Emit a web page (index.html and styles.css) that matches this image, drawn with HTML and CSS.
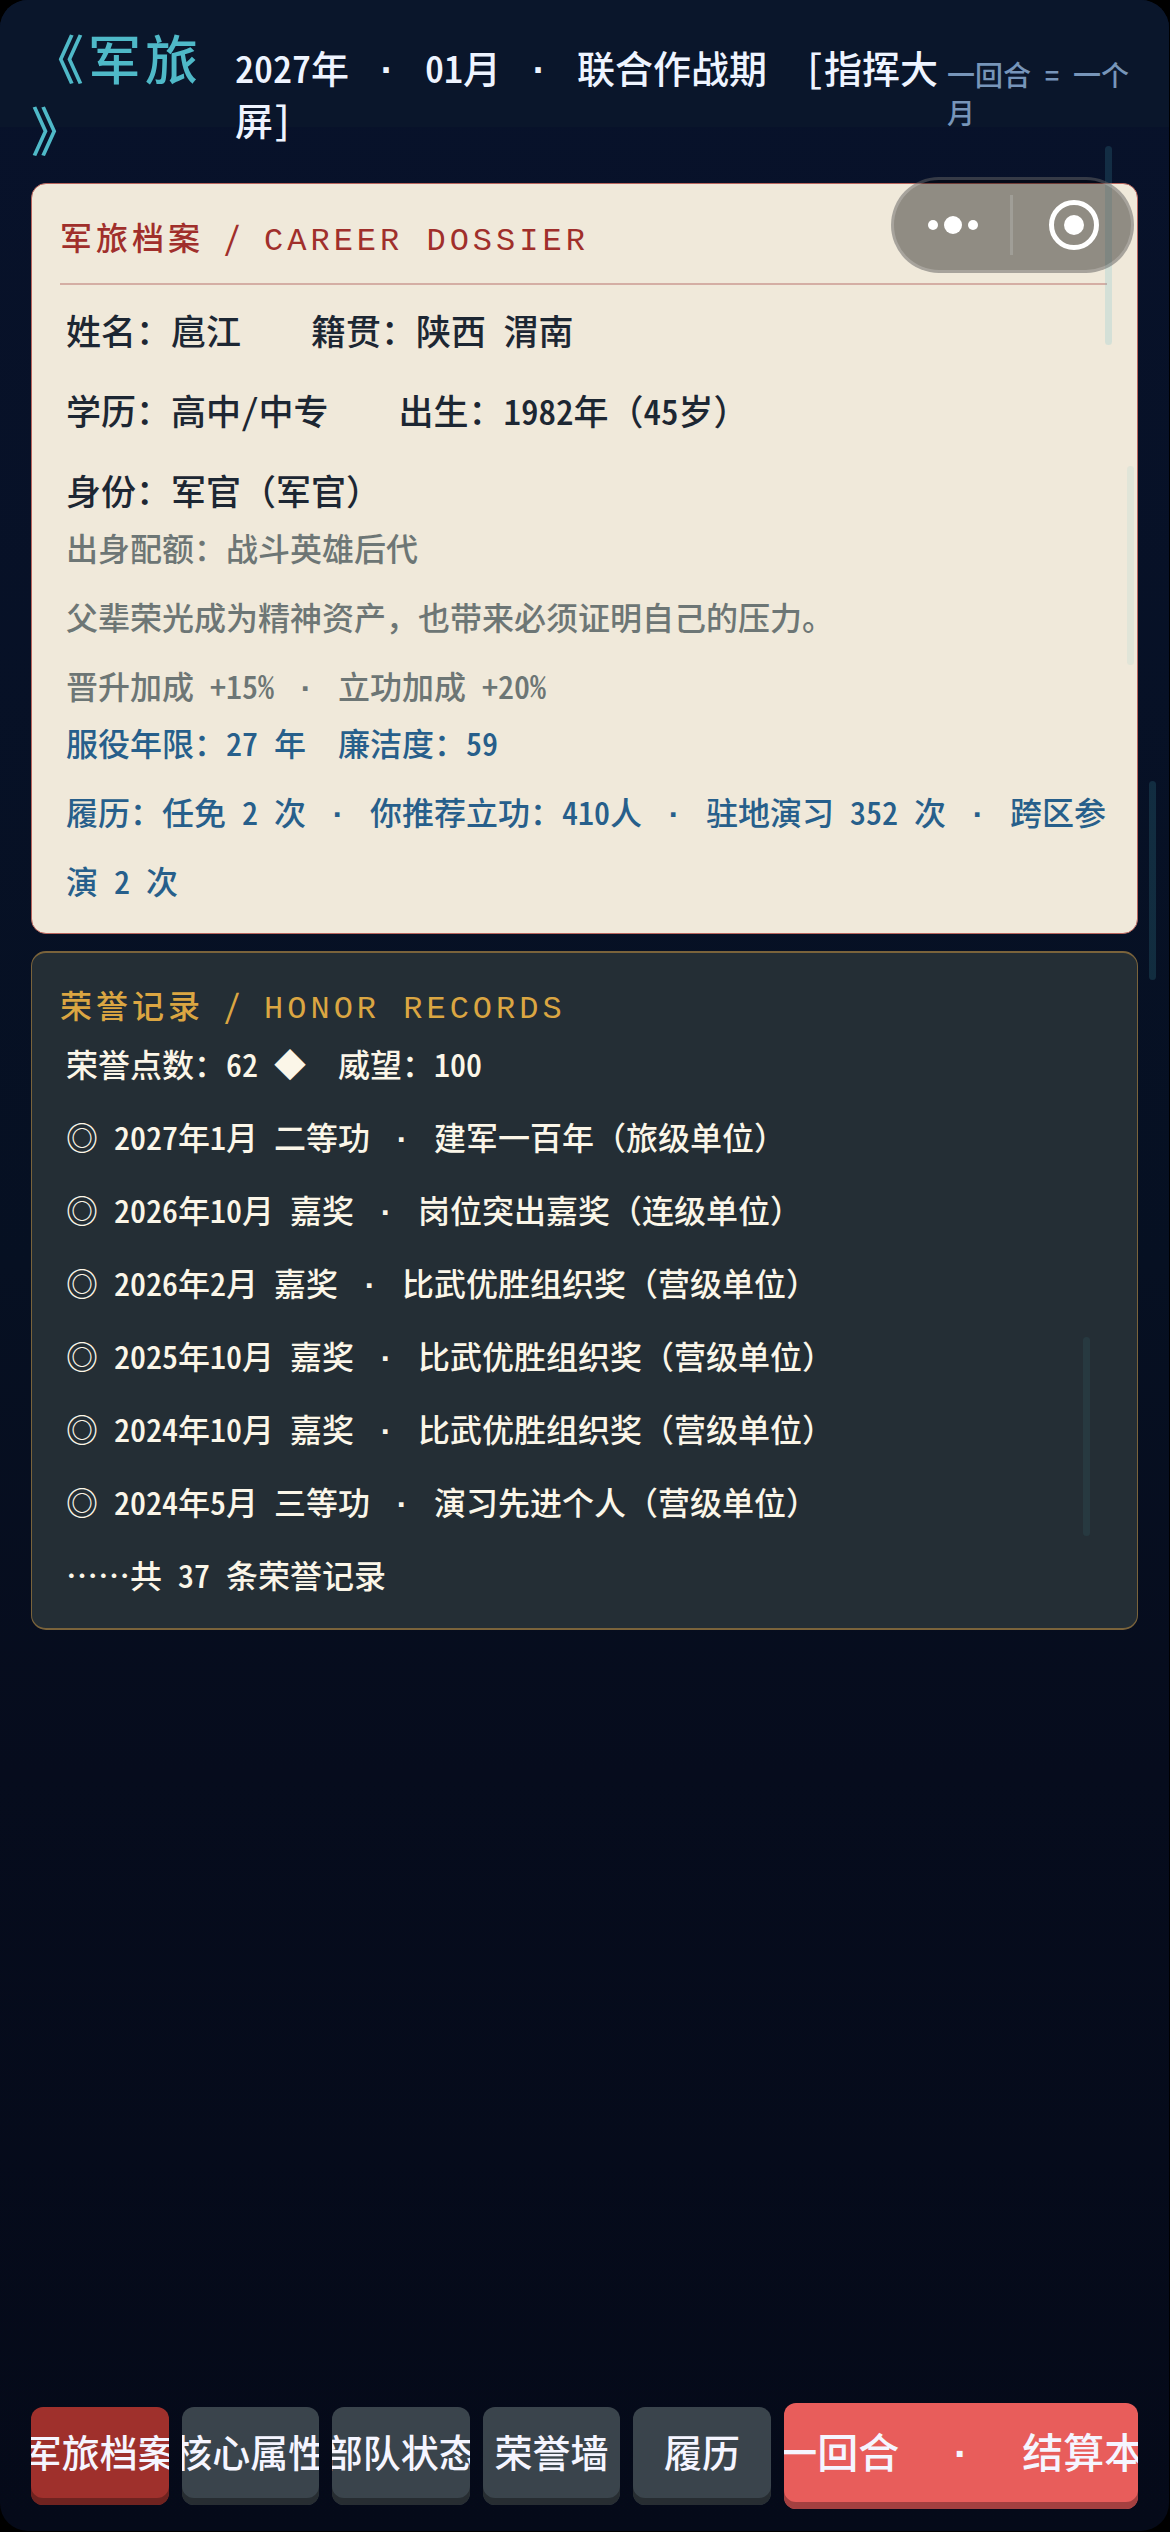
FILE: index.html
```html
<!DOCTYPE html>
<html lang="zh-CN">
<head>
<meta charset="utf-8">
<meta name="viewport" content="width=device-width, initial-scale=1">
<title>军旅</title>
<link rel="stylesheet" href="styles.css">
</head>
<body>
<div class="app">
  <header class="topbar">
    <h1 class="brand">《军旅》</h1>
    <p class="status">2027年 <i class="dot">·</i> 01月 <i class="dot">·</i> 联合作战期  [指挥大屏]</p>
    <p class="hint">一回合 = 一个月</p>
  </header>

  <main class="content">
    <section class="card dossier">
      <h2 class="card-title ruled">军旅档案 / <span class="latin">CAREER DOSSIER</span></h2>
      <div class="identity">
        <p>姓名：扈江    籍贯：陕西 渭南</p>
        <p>学历：高中/中专    出生：1982年<i class="full">（</i>45岁<i class="full">）</i></p>
        <p>身份：军官<i class="full">（军官）</i></p>
      </div>
      <div class="origin">
        <p>出身配额：战斗英雄后代</p>
        <p class="full">父辈荣光成为精神资产，也带来必须证明自己的压力。</p>
        <p>晋升加成 +15% <i class="dot">·</i> 立功加成 +20%</p>
      </div>
      <div class="service">
        <p>服役年限：27 年  廉洁度：59</p>
        <p>履历：任免 2 次 <i class="dot">·</i> 你推荐立功：410人 <i class="dot">·</i> 驻地演习 352 次 <i class="dot">·</i> 跨区参演 2 次</p>
      </div>
    </section>

    <section class="card honors">
      <h2 class="card-title">荣誉记录 / <span class="latin">HONOR RECORDS</span></h2>
      <p class="points">荣誉点数：62 ◆  威望：100</p>
      <ul class="records">
        <li>◎ 2027年1月 二等功 <i class="dot">·</i> 建军一百年<i class="full">（旅级单位）</i></li>
        <li>◎ 2026年10月 嘉奖 <i class="dot">·</i> 岗位突出嘉奖<i class="full">（连级单位）</i></li>
        <li>◎ 2026年2月 嘉奖 <i class="dot">·</i> 比武优胜组织奖<i class="full">（营级单位）</i></li>
        <li>◎ 2025年10月 嘉奖 <i class="dot">·</i> 比武优胜组织奖<i class="full">（营级单位）</i></li>
        <li>◎ 2024年10月 嘉奖 <i class="dot">·</i> 比武优胜组织奖<i class="full">（营级单位）</i></li>
        <li>◎ 2024年5月 三等功 <i class="dot">·</i> 演习先进个人<i class="full">（营级单位）</i></li>
        <li>……共 37 条荣誉记录</li>
      </ul>
    </section>
  </main>

  <nav class="tabs">
    <button type="button" class="tab active"><span>军旅档案</span></button>
    <button type="button" class="tab"><span>核心属性</span></button>
    <button type="button" class="tab"><span>部队状态</span></button>
    <button type="button" class="tab"><span>荣誉墙</span></button>
    <button type="button" class="tab"><span>履历</span></button>
    <button type="button" class="tab next"><span>下一回合  <i class="dot">·</i>  结算本月</span></button>
  </nav>

  <div class="streak streak-a"></div>
  <div class="streak streak-b"></div>
  <div class="streak streak-c"></div>
  <div class="streak streak-d"></div>

  <div class="capsule">
    <button type="button" class="capsule-btn" aria-label="更多">
      <svg width="60" height="60" viewBox="0 0 60 60" fill="#fff"><circle cx="10" cy="30" r="5"/><circle cx="30" cy="30" r="9"/><circle cx="50" cy="30" r="5"/></svg>
    </button>
    <button type="button" class="capsule-btn" aria-label="关闭">
      <svg width="60" height="60" viewBox="0 0 60 60"><circle cx="32" cy="30" r="22.5" fill="none" stroke="#fff" stroke-width="5"/><circle cx="32" cy="30" r="10" fill="#fff"/></svg>
    </button>
  </div>
</div>
</body>
</html>
```
FILE: styles.css
```css
* {
  box-sizing: border-box;
}

body {
  margin: 0;
  background: #000;
  font-family: "Noto Sans CJK SC", "Noto Sans", sans-serif;
  font-weight: 500;
  font-feature-settings: "hwid";
  text-autospace: no-autospace;
  text-spacing-trim: space-all;
}

h1, h2, p, ul {
  margin: 0;
  padding: 0;
  font-weight: inherit;
  white-space: pre-wrap;
  line-break: anywhere;
}

button {
  margin: 0;
  padding: 0;
  border: 0;
  font: inherit;
  font-feature-settings: inherit;
  color: inherit;
}

/* separator dot takes a full character cell */
.dot {
  display: inline-block;
  width: 1em;
  font-family: "Liberation Sans", sans-serif;
  font-style: normal;
  font-weight: 700;
  line-height: 1;
  text-align: center;
}

/* punctuation keeps its full-width form */
.full {
  font-style: normal;
  font-feature-settings: normal;
}

.app {
  position: relative;
  display: flex;
  flex-direction: column;
  min-height: calc(100vh - 1px);
  margin: 0 1px 1px 0;
  border-radius: 28px;
  overflow: hidden;
  background: linear-gradient(#08122b, #061022 50%, #060c1d 70%, #050a19);
}

.topbar {
  display: grid;
  grid-template-columns: 204px 1fr 191px;
  align-items: center;
  padding: 21px 31px 18px;
  background: linear-gradient(#0a162b, #0a162b) no-repeat 0 0 / 100% 127px;
}

.brand {
  font-size: 53px;
  line-height: 72px;
  letter-spacing: 4px;
  color: #4fb9c8;
}

.status {
  font-size: 38px;
  line-height: 52px;
  color: #eef4ff;
}

.hint {
  font-size: 28px;
  line-height: 38px;
  color: #7795b9;
}

.content {
  flex: 1;
  display: flex;
  flex-direction: column;
  gap: 17px;
  padding: 0 31px;
}

.card {
  padding: 28px 30px 18px;
  border: 1px solid;
  border-radius: 15px;
}

.dossier {
  background: #f0e9da;
  border-color: #b9655d;
}

.honors {
  padding: 27px 30px 17px;
  background: #242e35;
  border-width: 2px 1px;
  border-color: #7a633b;
  color: #fbf6e8;
}

.card-title {
  font-size: 32px;
  line-height: 48px;
  letter-spacing: 4px;
  margin-left: -2px;
  color: #a02f2b;
}

.honors .card-title {
  color: #dba642;
}

.latin {
  font-family: "Liberation Mono", monospace;
  line-height: 1;
}

.ruled {
  padding-bottom: 23px;
  border-bottom: 2px solid #d4aea4;
}

.identity,
.origin,
.service,
.points,
.records {
  margin-left: 4px;
  margin-right: -16px;
}

.identity {
  display: flex;
  flex-direction: column;
  gap: 32px;
  margin-top: 21px;
  font-size: 35px;
  line-height: 48px;
  color: #1d2733;
}

.origin {
  display: flex;
  flex-direction: column;
  gap: 24px;
  margin-top: 11px;
  font-size: 32px;
  line-height: 45px;
  color: #6d7675;
}

.service {
  font-size: 32px;
  line-height: 69px;
  color: #275f8b;
}

.points {
  margin-top: 11px;
  font-size: 32px;
  line-height: 48px;
}

.records {
  margin-top: 13px;
  list-style: none;
  white-space: normal;
  font-size: 32px;
  line-height: 73px;
}

.records li {
  white-space: pre-wrap;
}

.tabs {
  display: flex;
  align-items: center;
  gap: 13px;
  padding: 0 31px 22px;
}

.tab {
  flex: 1;
  display: flex;
  justify-content: center;
  align-items: center;
  min-width: 0;
  height: 98px;
  padding-bottom: 12px;
  border-radius: 12px;
  overflow: hidden;
  background: #3a444c;
  box-shadow: inset 0 -7px #272d32;
  font-size: 38px;
  color: #f5f5ff;
}

.tab span {
  flex: none;
  white-space: pre;
}

.active {
  background: #9f302c;
  box-shadow: inset 0 -7px #6f2320;
}

.next {
  flex: 0 0 32%;
  height: 106px;
  background: #e85d5b;
  box-shadow: inset 0 -7px #a44040;
  font-size: 41px;
}

.streak {
  position: absolute;
  width: 7px;
  height: 199px;
  border-radius: 4px;
  background: #4fb9c8;
  opacity: 0.17;
  pointer-events: none;
}

.streak-a { top: 146px; right: 57px; }
.streak-b { top: 466px; right: 35px; opacity: 0.09; }
.streak-c { top: 781px; right: 13px; }
.streak-d { top: 1337px; right: 79px; opacity: 0.08; }

.capsule {
  position: absolute;
  top: 177px;
  right: 35px;
  display: flex;
  width: 243px;
  height: 96px;
  border: 3px solid rgba(255, 255, 255, 0.2);
  border-radius: 48px;
  background: rgba(0, 0, 0, 0.4);
}

.capsule-btn {
  flex: 1;
  display: flex;
  justify-content: center;
  align-items: center;
  background: linear-gradient(#a09e97, #a09e97) no-repeat 100% 50% / 3px 60px;
}

.capsule-btn:last-child {
  background: none;
}
```
